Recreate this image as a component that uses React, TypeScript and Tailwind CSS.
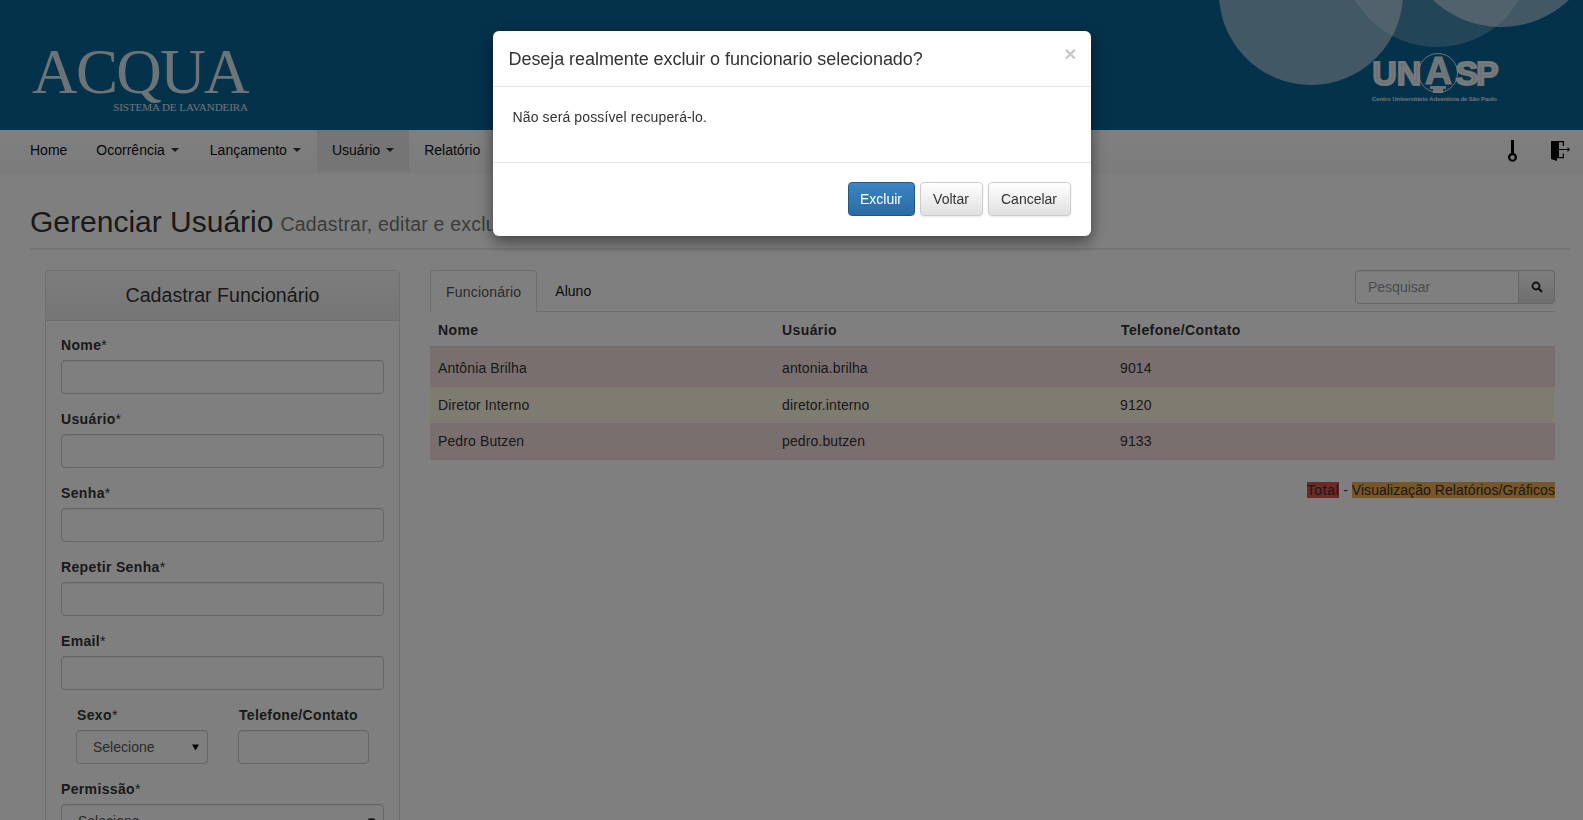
const fields = ['Nome', 'Usuário', 'Senha', 'Repetir Senha', 'Email'];

const rows = [
  { nome: 'Antônia Brilha', usuario: 'antonia.brilha', fone: '9014', bg: 'bg-[#f2dede]', h: 'h-[39px]' },
  { nome: 'Diretor Interno', usuario: 'diretor.interno', fone: '9120', bg: 'bg-[#fcf8e3] pb-[1px]', h: 'h-[36px]' },
  { nome: 'Pedro Butzen', usuario: 'pedro.butzen', fone: '9133', bg: 'bg-[#f2dede] pb-[1px]', h: 'h-[37px]' },
];

function Caret() {
  return <span className="ml-[6px] inline-block h-0 w-0 border-x-4 border-t-4 border-x-transparent border-t-[#333] align-middle" />;
}

function Label({ text, star = true }: { text: string; star?: boolean }) {
  return (
    <label className="mb-[5px] block h-5 text-sm font-bold leading-5 tracking-[0.35px] text-[#333]">
      {text}
      {star && <span className="font-normal">*</span>}
    </label>
  );
}

function FakeSelect({ className }: { className: string }) {
  return (
    <div className={`relative h-[34px] rounded border border-[#ccc] bg-white pl-4 text-sm leading-8 text-[#555] shadow-[inset_0_1px_1px_rgba(0,0,0,0.075)] ${className}`}>
      Selecione
      <svg className="absolute right-[8px] top-[13px]" width="7" height="7" viewBox="0 0 7 7">
        <path d="M0 0.5h7L3.5 6.5z" fill="#111" />
      </svg>
    </div>
  );
}

function Header() {
  return (
    <header className="relative flex h-[130px] items-start justify-between overflow-hidden bg-[#0a6496]">
      <svg className="absolute inset-0" width="1583" height="130" aria-hidden>
        <circle cx="1311" cy="-7" r="92" fill="#fff" fillOpacity="0.5" />
        <circle cx="1437" cy="-48" r="95" fill="#fff" fillOpacity="0.25" />
        <circle cx="1501" cy="-72" r="99" fill="#fff" fillOpacity="0.5" />
      </svg>
      <div className="relative ml-[32px] mt-[36px] flex w-fit flex-col items-end font-['Liberation_Serif',serif] text-white/85">
        <div className="text-[63px] leading-[72px] tracking-[-1.6px]">ACQUA</div>
        <div className="-mt-[7px] text-[11px] leading-[12px] tracking-[-0.05px]">SISTEMA DE LAVANDEIRA</div>
      </div>
      <div className="relative mr-[87px] mt-[53px] flex w-[123px] flex-col items-center font-['Liberation_Sans',sans-serif] text-white/85">
        <div className="flex h-[40px] items-center text-[34px] font-bold leading-none [-webkit-text-stroke:2px_rgba(255,255,255,0.85)]">
          <span className="tracking-[0px]">UN</span>
          <span className="relative flex h-[40px] w-[34px] items-center justify-center text-[38px]">
            <svg className="absolute -left-[3px] top-0 overflow-visible" width="40" height="40" viewBox="0 0 40 40" aria-hidden>
              <circle cx="20" cy="20" r="19.500" fill="none" stroke="#fff" strokeOpacity="0.85" strokeWidth="1" />
              <path d="M12 33h16v3h-3v4h-10v-4h-3z" fill="#fff" fillOpacity="0.85" />
            </svg>
            <span className="relative -mt-[5px] [-webkit-text-stroke:1px_rgba(255,255,255,0.85)]">A</span>
          </span>
          <span className="tracking-[-2px]">SP</span>
        </div>
        <div className="mt-[1px] whitespace-nowrap text-[5.800px] font-bold leading-[10px]">Centro Universitário Adventista de São Paulo</div>
      </div>
    </header>
  );
}

function Navbar() {
  return (
    <nav className="flex h-[41px] items-stretch justify-between bg-gradient-to-b from-white to-[#f8f8f8] pl-[15px] pr-[13px] text-sm text-[#111] shadow-[0_1px_5px_rgba(0,0,0,0.075)]">
      <div className="flex">
        <a className="flex items-center pb-[1px] pl-[15px] pr-[14px]">Home</a>
        <a className="flex items-center pb-[1px] pl-[15px] pr-[16px]">Ocorrência<Caret /></a>
        <a className="flex items-center pb-[1px] pl-[15px] pr-[16px]">Lançamento<Caret /></a>
        <a className="flex items-center bg-[#ebebeb] pb-[1px] px-[15px]">Usuário<Caret /></a>
        <a className="flex items-center pb-[1px] px-[15px]">Relatório</a>
      </div>
      <div className="flex items-center gap-[34px]">
        <svg width="9" height="22" viewBox="0 0 9 22" aria-hidden>
          <path
            fillRule="evenodd"
            d="M3 0h3v13A4.500 4.500 0 1 1 3 13zM4.500 15.300a2.200 2.200 0 1 0 0 4.400 2.200 2.200 0 0 0 0-4.400z"
            fill="#000"
          />
        </svg>
        <svg width="19" height="20" viewBox="0 0 19 20" aria-hidden>
          <path d="M0 0h13v5h-1.300V1.300H8V16h3.700v-3.500H13V17.300H6V20L0 18z" fill="#000" />
          <path d="M7 8h9.500V6L19 8.500 16.500 11V9H7z" fill="#000" />
        </svg>
      </div>
    </nav>
  );
}

function CadastroPanel() {
  return (
    <div className="w-[355px] shrink-0 rounded border border-[#ddd] bg-white">
      <div className="flex h-[50px] items-center justify-center rounded-t border-b border-[#ddd] bg-gradient-to-b from-[#fafafa] to-[#ebebeb] text-[19.6px] text-[#333]">
        Cadastrar Funcionário
      </div>
      <div className="px-[15px] pt-[14px]">
        {fields.map(f => (
          <div key={f} className="mb-[15px]">
            <Label text={f} />
            <input className="block h-[34px] w-full rounded border border-[#ccc] bg-white shadow-[inset_0_1px_1px_rgba(0,0,0,0.075)]" />
          </div>
        ))}
        <div className="mb-[15px] flex gap-[30px] px-[15px]">
          <div>
            <div className="pl-[1px]">
              <Label text="Sexo" />
            </div>
            <FakeSelect className="w-[132px]" />
          </div>
          <div>
            <div className="pl-[1px]">
              <Label text="Telefone/Contato" star={false} />
            </div>
            <input className="block h-[34px] w-[131px] rounded border border-[#ccc] bg-white shadow-[inset_0_1px_1px_rgba(0,0,0,0.075)]" />
          </div>
        </div>
        <Label text="Permissão" />
        <FakeSelect className="w-full" />
      </div>
    </div>
  );
}

function UsuariosTable() {
  return (
    <div className="min-w-0 flex-1">
      <div className="flex h-[42px] items-start justify-between border-b border-[#ddd]">
        <div className="flex text-sm">
          <a className="flex h-[42px] items-center rounded-t border border-b-0 border-[#ddd] bg-white px-[15px] tracking-[0.2px] text-[#555]">Funcionário</a>
          <a className="flex h-[41px] items-center px-[18px] text-[#111]">Aluno</a>
        </div>
        <div className="flex h-[34px] w-[200px]">
          <input
            placeholder="Pesquisar"
            className="h-full min-w-0 flex-1 rounded-l border border-[#ccc] bg-white px-3 text-sm shadow-[inset_0_1px_1px_rgba(0,0,0,0.075)] outline-none placeholder:text-[#999]"
          />
          <button className="flex w-[36px] items-center justify-center rounded-r border border-l-0 border-[#ccc] bg-gradient-to-b from-white to-[#dcdcdc]">
            <svg width="12" height="12" viewBox="0 0 12 12" aria-hidden>
              <circle cx="5" cy="5" r="3.500" fill="none" stroke="#222" strokeWidth="1.800" />
              <path d="M7.800 7.800L11 11" stroke="#222" strokeWidth="2.200" />
            </svg>
          </button>
        </div>
      </div>
      <div className="grid h-[36px] grid-cols-[344px_339px_1fr] items-center border-b-2 border-[#ddd] pt-[2px] text-sm font-bold tracking-[0.4px] text-[#333]">
        <div className="pl-2">Nome</div>
        <div className="pl-2">Usuário</div>
        <div className="pl-2">Telefone/Contato</div>
      </div>
      {rows.map(r => (
        <div key={r.nome} className={`grid grid-cols-[344px_339px_1fr] items-center text-sm tracking-[0.12px] text-[#333] ${r.bg} ${r.h}`}>
          <div className="pl-2">{r.nome}</div>
          <div className="pl-2">{r.usuario}</div>
          <div className="pl-[7px]">{r.fone}</div>
        </div>
      ))}
      <div className="mt-[22px] flex justify-end text-sm leading-4 text-[#333]">
        <span className="bg-[#d9534f] tracking-[0.6px]">Total</span>
        <span className="whitespace-pre"> - </span>
        <span className="bg-[#f0ad4e] tracking-[0.06px]">Visualização Relatórios/Gráficos</span>
      </div>
    </div>
  );
}

function ExcluirModal() {
  return (
    <div className="fixed inset-0 bg-black/50">
      <div className="mx-auto mt-[31px] w-[598px] rounded-md bg-white text-[#333] shadow-[0_5px_15px_rgba(0,0,0,0.5)]">
        <div className="flex h-[56px] items-start justify-between border-b border-[#e5e5e5] pl-[16px] pr-[14px] pt-[15px]">
          <h4 className="text-[18px] leading-[26px] tracking-[-0.06px] text-[#333]">Deseja realmente excluir o funcionario selecionado?</h4>
          <span className="-mt-[3px] text-[21px] font-bold leading-[21px] text-[#c8c8c8]">×</span>
        </div>
        <div className="h-[75px] pl-[20px] pt-[20px] text-sm leading-5 tracking-[0.13px]">Não será possível recuperá-lo.</div>
        <div className="flex h-[74px] items-start justify-end gap-[5px] border-t border-[#e5e5e5] pr-[20px] pt-[19px] text-sm">
          <button className="h-[34px] w-[67px] rounded border border-[#245580] bg-gradient-to-b from-[#3a85c2] to-[#2b6ba3] text-white">Excluir</button>
          <button className="h-[34px] w-[63px] rounded border border-[#ccc] bg-gradient-to-b from-white to-[#e0e0e0] text-[#333] shadow-[0_1px_2px_rgba(0,0,0,0.1)]">Voltar</button>
          <button className="h-[34px] w-[83px] rounded border border-[#ccc] bg-gradient-to-b from-white to-[#e0e0e0] text-[#333] shadow-[0_1px_2px_rgba(0,0,0,0.1)]">Cancelar</button>
        </div>
      </div>
    </div>
  );
}

export default function App() {
  return (
    <div className="h-[820px] overflow-hidden bg-white font-['Liberation_Sans',Arial,sans-serif]">
      <Header />
      <Navbar />
      <main className="px-[30px] pr-[13px]">
        <div className="mt-[30px] flex h-[49px] items-center gap-[7px] border-b-2 border-[#e8e8e8] pb-[6px]">
          <h2 className="text-[30px] leading-[33px] text-[#333]">Gerenciar Usuário</h2>
          <span className="mt-[7px] text-[19.5px] tracking-[0.2px] text-[#777]">Cadastrar, editar e excluir usuários do sistema</span>
        </div>
        <div className="mt-[20px] flex gap-[30px] px-[15px]">
          <CadastroPanel />
          <UsuariosTable />
        </div>
      </main>
      <ExcluirModal />
    </div>
  );
}
